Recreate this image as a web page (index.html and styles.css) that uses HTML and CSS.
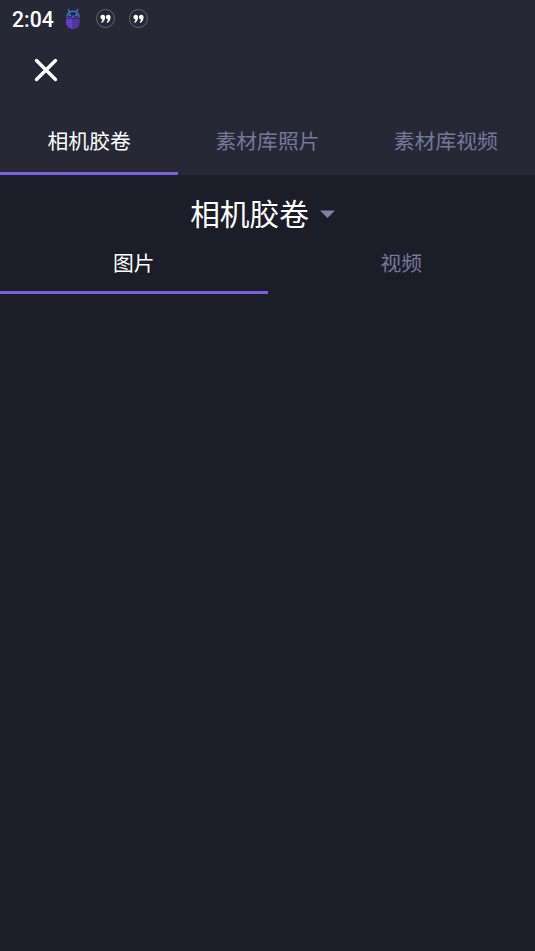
FILE: index.html
```html
<!DOCTYPE html>
<html lang="zh-CN">
<head>
<meta charset="utf-8">
<title>相机胶卷</title>
<link rel="stylesheet" href="styles.css">
</head>
<body>
<header class="top">
  <div class="status">
    <span class="time">2:04</span>
    <svg class="bug" width="16" height="22" viewBox="0 0 16 22"><path d="M1.200 10.700h13.600V14.500a6.800 6.800 0 0 1-13.600 0z" fill="#5034a0"/><path d="M1.200 10.700h6v10a6.800 6.800 0 0 1-6-6.200z" fill="#6540c4"/><path d="M2 8.700a6 5.400 0 0 1 12 0M3.200 1l1.500 3M12.800 1l-1.500 3" fill="none" stroke="#3878d0" stroke-width="1.500"/><path d="M4 6h2v2H4zM10 6h2v2h-2zM7 7.500h2V9H7z" fill="#3878d0"/><path d="M1.200 9.300h13.600" stroke="#5148bd"/></svg>
    <svg class="quote" width="20" height="20" viewBox="0 0 20 20"><circle cx="9.500" cy="9.500" r="9" fill="none" stroke="#6c6d79" stroke-width=".9"/><path d="M9.100 7.700c0 3-1 4.900-3.200 6.200l-.8-.9c1-.9 1.400-1.700 1.400-2.500A2.400 2.400 0 1 1 9.100 7.700zM14.600 7.700c0 3-1 4.900-3.200 6.200l-.8-.9c1-.9 1.400-1.700 1.400-2.500A2.400 2.400 0 1 1 14.600 7.700z" fill="#fff"/></svg>
    <svg class="quote" width="20" height="20" viewBox="0 0 20 20"><circle cx="9.500" cy="9.500" r="9" fill="none" stroke="#6c6d79" stroke-width=".9"/><path d="M9.100 7.700c0 3-1 4.900-3.200 6.200l-.8-.9c1-.9 1.400-1.700 1.400-2.500A2.400 2.400 0 1 1 9.100 7.700zM14.600 7.700c0 3-1 4.900-3.200 6.200l-.8-.9c1-.9 1.400-1.700 1.400-2.500A2.400 2.400 0 1 1 14.600 7.700z" fill="#fff"/></svg>
  </div>
  <div class="bar"><svg width="24" height="24" viewBox="0 0 24 24"><path d="M2.500 2.500l19 19M21.500 2.500l-19 19" stroke="#fff" stroke-width="3.400" stroke-linecap="round"/></svg></div>
  <nav class="tabs main"><span class="tab active">相机胶卷</span><span class="tab">素材库照片</span><span class="tab">素材库视频</span></nav>
</header>
<div class="album"><span>相机胶卷</span><svg width="15" height="8" viewBox="0 0 15 8"><path d="M0 .5h15L7.500 8z" fill="#8280a8"/></svg></div>
<nav class="tabs sub"><span class="tab active">图片</span><span class="tab">视频</span></nav>
</body>
</html>
```
FILE: styles.css
```css
body {
  margin: 0;
  height: 951px;
  overflow: hidden;
  background: #1b1d28;
  color: #fff;
  font-family: Roboto, "Noto Sans CJK SC", sans-serif;
}
svg { display: block; flex: none; }
.top { height: 175px; background: #262835; }
.status { height: 37px; display: flex; align-items: center; padding-left: 12px; }
.time { width: 42px; font-size: 21.200px; font-weight: 500; line-height: 35px; padding-top: 1px; }
.bug { margin-left: 11px; }
.quote { margin-left: 15px; }
.quote + .quote { margin-left: 13px; }
.bar { height: 66px; display: flex; align-items: center; padding-left: 34px; }
.tabs { display: flex; }
.tab {
  flex: 1;
  box-sizing: border-box;
  border-bottom: 3px solid transparent;
  text-align: center;
  font-size: 20.800px;
  color: #77779c;
}
.active { color: #fff; border-color: #7b60e0; }
.main .tab { height: 72px; line-height: 79px; }
.album { height: 73px; display: flex; align-items: center; justify-content: center; gap: 11px; font-size: 29.700px; padding: 4px 10px 0 0; box-sizing: border-box; }
.album span { margin-top: -3px; }
.sub .tab { height: 46px; line-height: 33px; }
```
